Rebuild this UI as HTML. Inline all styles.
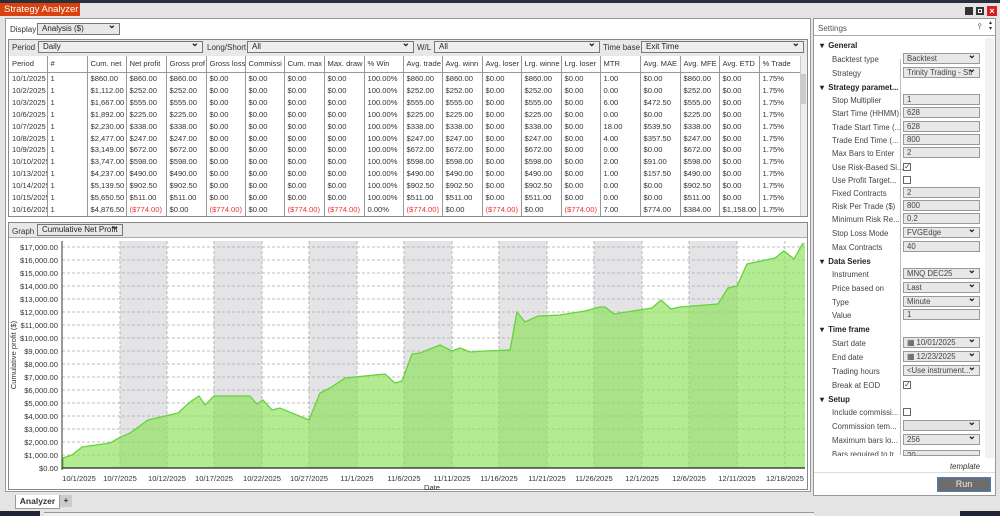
<!DOCTYPE html>
<html><head><meta charset="utf-8"><style>
*{box-sizing:border-box;margin:0;padding:0}
body{width:1000px;height:516px;overflow:hidden;background:#e4e4e4;font-family:"Liberation Sans",sans-serif;font-size:8px;color:#333;position:relative}
.a{position:absolute}
.sel{position:absolute;background:#e8e8e8;border:1px solid #777;height:12px;font-size:8px;line-height:10px;padding-left:4px;color:#222}
.sel::after{content:"⌄";position:absolute;right:3px;top:-3px;font-size:10px;font-weight:bold}
table{border-collapse:collapse;table-layout:fixed}
td{font-size:7.6px;white-space:nowrap;overflow:hidden;padding-left:3px;height:11.9px;line-height:11.9px;border-left:1px solid #999;color:#333}
tr.h td{height:16px;line-height:16px;border-bottom:1px solid #999}
.r{color:#e33}
.set div{position:absolute;font-size:7.8px;color:#444}
.lbl{left:832px}
.hd{left:820px;font-weight:bold;color:#222!important}
.inp{left:903px;width:77px;height:11px;background:#e8e8e8;border:1px solid #999;padding-left:3px;line-height:9px}
.dd::after{content:"⌄";position:absolute;right:3px;top:-3px;font-size:10px;font-weight:bold;color:#222}
.cb{left:903px;width:8px;height:8px;border:1px solid #666;background:#fff;font-size:7px;line-height:6px;text-align:center}
</style></head><body>
<!-- top bar -->
<div class="a" style="left:0;top:0;width:1000px;height:3px;background:#2a2f3c"></div>
<div class="a" style="left:0;top:3px;width:80px;height:13px;background:#d9420f;color:#fff;font-size:9.5px;line-height:13px;padding-left:4px">Strategy Analyzer</div>
<div class="a" style="left:80px;top:3px;width:920px;height:13px;background:#e4e4e4"></div>
<div class="a" style="left:965px;top:7px;width:8px;height:8px;background:#333"></div>
<div class="a" style="left:976px;top:7px;width:8px;height:8px;background:#333;border:2px solid #333;box-shadow:inset 0 0 0 1px #fff"></div>
<div class="a" style="left:987px;top:6px;width:10px;height:10px;background:#d42020;color:#fff;font-size:9px;line-height:10px;text-align:center;font-weight:bold">×</div>

<!-- left main panel -->
<div class="a" style="left:5px;top:18px;width:806px;height:474px;border:1px solid #999;background:#fff"></div>
<div class="a" style="left:10px;top:25px;font-size:8px">Display</div>
<div class="sel" style="left:37px;top:23px;width:83px">Analysis ($)</div>
<div class="a" style="left:8px;top:39px;width:800px;height:178px;border:1px solid #888;background:#e8e8e8"></div>
<div class="a" style="left:12px;top:43px">Period</div>
<div class="sel" style="left:38px;top:41px;width:165px;background:#eee">Daily</div>
<div class="a" style="left:207px;top:43px">Long/Short</div>
<div class="sel" style="left:247px;top:41px;width:167px;background:#eee">All</div>
<div class="a" style="left:417px;top:43px">W/L</div>
<div class="sel" style="left:434px;top:41px;width:166px;background:#eee">All</div>
<div class="a" style="left:603px;top:43px">Time base</div>
<div class="sel" style="left:641px;top:41px;width:163px;background:#eee">Exit Time</div>
<div class="a" style="left:9px;top:56px;width:798px;height:160px;background:#fff;overflow:hidden">
<table style="width:791px">
<colgroup><col style="width:38px"><col style="width:40px"><col style="width:39px"><col style="width:40px"><col style="width:40px"><col style="width:39px"><col style="width:39px"><col style="width:40px"><col style="width:40px"><col style="width:39px"><col style="width:39px"><col style="width:40px"><col style="width:39px"><col style="width:40px"><col style="width:39px"><col style="width:40px"><col style="width:40px"><col style="width:39px"><col style="width:40px"><col style="width:41px"></colgroup>
<tr class="h"><td style="border-left:0">Period</td><td>#</td><td>Cum. net</td><td>Net profit</td><td>Gross prof</td><td>Gross loss</td><td>Commissi</td><td>Cum. max</td><td>Max. draw</td><td>% Win</td><td>Avg. trade</td><td>Avg. winn</td><td>Avg. loser</td><td>Lrg. winne</td><td>Lrg. loser</td><td>MTR</td><td>Avg. MAE</td><td>Avg. MFE</td><td>Avg. ETD</td><td>% Trade</td></tr>
<tr><td style="border-left:0">10/1/2025</td><td>1</td><td>$860.00</td><td>$860.00</td><td>$860.00</td><td>$0.00</td><td>$0.00</td><td>$0.00</td><td>$0.00</td><td>100.00%</td><td>$860.00</td><td>$860.00</td><td>$0.00</td><td>$860.00</td><td>$0.00</td><td>1.00</td><td>$0.00</td><td>$860.00</td><td>$0.00</td><td>1.75%</td></tr>
<tr><td style="border-left:0">10/2/2025</td><td>1</td><td>$1,112.00</td><td>$252.00</td><td>$252.00</td><td>$0.00</td><td>$0.00</td><td>$0.00</td><td>$0.00</td><td>100.00%</td><td>$252.00</td><td>$252.00</td><td>$0.00</td><td>$252.00</td><td>$0.00</td><td>0.00</td><td>$0.00</td><td>$252.00</td><td>$0.00</td><td>1.75%</td></tr>
<tr><td style="border-left:0">10/3/2025</td><td>1</td><td>$1,667.00</td><td>$555.00</td><td>$555.00</td><td>$0.00</td><td>$0.00</td><td>$0.00</td><td>$0.00</td><td>100.00%</td><td>$555.00</td><td>$555.00</td><td>$0.00</td><td>$555.00</td><td>$0.00</td><td>6.00</td><td>$472.50</td><td>$555.00</td><td>$0.00</td><td>1.75%</td></tr>
<tr><td style="border-left:0">10/6/2025</td><td>1</td><td>$1,892.00</td><td>$225.00</td><td>$225.00</td><td>$0.00</td><td>$0.00</td><td>$0.00</td><td>$0.00</td><td>100.00%</td><td>$225.00</td><td>$225.00</td><td>$0.00</td><td>$225.00</td><td>$0.00</td><td>0.00</td><td>$0.00</td><td>$225.00</td><td>$0.00</td><td>1.75%</td></tr>
<tr><td style="border-left:0">10/7/2025</td><td>1</td><td>$2,230.00</td><td>$338.00</td><td>$338.00</td><td>$0.00</td><td>$0.00</td><td>$0.00</td><td>$0.00</td><td>100.00%</td><td>$338.00</td><td>$338.00</td><td>$0.00</td><td>$338.00</td><td>$0.00</td><td>18.00</td><td>$539.50</td><td>$338.00</td><td>$0.00</td><td>1.75%</td></tr>
<tr><td style="border-left:0">10/8/2025</td><td>1</td><td>$2,477.00</td><td>$247.00</td><td>$247.00</td><td>$0.00</td><td>$0.00</td><td>$0.00</td><td>$0.00</td><td>100.00%</td><td>$247.00</td><td>$247.00</td><td>$0.00</td><td>$247.00</td><td>$0.00</td><td>4.00</td><td>$357.50</td><td>$247.00</td><td>$0.00</td><td>1.75%</td></tr>
<tr><td style="border-left:0">10/9/2025</td><td>1</td><td>$3,149.00</td><td>$672.00</td><td>$672.00</td><td>$0.00</td><td>$0.00</td><td>$0.00</td><td>$0.00</td><td>100.00%</td><td>$672.00</td><td>$672.00</td><td>$0.00</td><td>$672.00</td><td>$0.00</td><td>0.00</td><td>$0.00</td><td>$672.00</td><td>$0.00</td><td>1.75%</td></tr>
<tr><td style="border-left:0">10/10/2025</td><td>1</td><td>$3,747.00</td><td>$598.00</td><td>$598.00</td><td>$0.00</td><td>$0.00</td><td>$0.00</td><td>$0.00</td><td>100.00%</td><td>$598.00</td><td>$598.00</td><td>$0.00</td><td>$598.00</td><td>$0.00</td><td>2.00</td><td>$91.00</td><td>$598.00</td><td>$0.00</td><td>1.75%</td></tr>
<tr><td style="border-left:0">10/13/2025</td><td>1</td><td>$4,237.00</td><td>$490.00</td><td>$490.00</td><td>$0.00</td><td>$0.00</td><td>$0.00</td><td>$0.00</td><td>100.00%</td><td>$490.00</td><td>$490.00</td><td>$0.00</td><td>$490.00</td><td>$0.00</td><td>1.00</td><td>$157.50</td><td>$490.00</td><td>$0.00</td><td>1.75%</td></tr>
<tr><td style="border-left:0">10/14/2025</td><td>1</td><td>$5,139.50</td><td>$902.50</td><td>$902.50</td><td>$0.00</td><td>$0.00</td><td>$0.00</td><td>$0.00</td><td>100.00%</td><td>$902.50</td><td>$902.50</td><td>$0.00</td><td>$902.50</td><td>$0.00</td><td>0.00</td><td>$0.00</td><td>$902.50</td><td>$0.00</td><td>1.75%</td></tr>
<tr><td style="border-left:0">10/15/2025</td><td>1</td><td>$5,650.50</td><td>$511.00</td><td>$511.00</td><td>$0.00</td><td>$0.00</td><td>$0.00</td><td>$0.00</td><td>100.00%</td><td>$511.00</td><td>$511.00</td><td>$0.00</td><td>$511.00</td><td>$0.00</td><td>0.00</td><td>$0.00</td><td>$511.00</td><td>$0.00</td><td>1.75%</td></tr>
<tr><td style="border-left:0">10/16/2025</td><td>1</td><td>$4,876.50</td><td class="r">($774.00)</td><td>$0.00</td><td class="r">($774.00)</td><td>$0.00</td><td class="r">($774.00)</td><td class="r">($774.00)</td><td>0.00%</td><td class="r">($774.00)</td><td>$0.00</td><td class="r">($774.00)</td><td>$0.00</td><td class="r">($774.00)</td><td>7.00</td><td>$774.00</td><td>$384.00</td><td>$1,158.00</td><td>1.75%</td></tr>
<tr><td style="border-left:0">&nbsp;</td><td></td><td></td><td></td><td></td><td></td><td></td><td></td><td></td><td></td><td></td><td></td><td></td><td></td><td></td><td></td><td></td><td></td><td></td><td></td></tr>
</table>
<div class="a" style="left:791px;top:0;width:7px;height:160px;background:#eee;border-left:1px solid #ccc"></div>
<div class="a" style="left:792px;top:18px;width:5px;height:30px;background:#ccc"></div>
</div>

<!-- graph panel -->
<div class="a" style="left:8px;top:222px;width:800px;height:268px;border:1px solid #888;background:#fff"></div>
<div class="a" style="left:9px;top:223px;width:798px;height:15px;background:#e8e8e8;border-bottom:1px solid #aaa"></div>
<div class="a" style="left:12px;top:227px">Graph</div>
<div class="sel" style="left:37px;top:224px;width:86px">Cumulative Net Profit</div>

<svg class="a" style="left:0;top:0" width="1000" height="516" font-family="Liberation Sans, sans-serif">
<g fill="#e4e4e6">
<rect x="120" y="241" width="47" height="227"/><rect x="214" y="241" width="48" height="227"/><rect x="309" y="241" width="48" height="227"/><rect x="404" y="241" width="48" height="227"/><rect x="499" y="241" width="48" height="227"/><rect x="594" y="241" width="48" height="227"/><rect x="689" y="241" width="48" height="227"/>
</g>
<g stroke="#aaa" stroke-dasharray="3,2" stroke-width="0.8">
<line x1="62" x2="805" y1="247" y2="247"/><line x1="62" x2="805" y1="260" y2="260"/><line x1="62" x2="805" y1="273" y2="273"/><line x1="62" x2="805" y1="286" y2="286"/><line x1="62" x2="805" y1="299" y2="299"/><line x1="62" x2="805" y1="312" y2="312"/><line x1="62" x2="805" y1="325" y2="325"/><line x1="62" x2="805" y1="338" y2="338"/><line x1="62" x2="805" y1="351" y2="351"/><line x1="62" x2="805" y1="364" y2="364"/><line x1="62" x2="805" y1="377" y2="377"/><line x1="62" x2="805" y1="390" y2="390"/><line x1="62" x2="805" y1="403" y2="403"/><line x1="62" x2="805" y1="416" y2="416"/><line x1="62" x2="805" y1="429" y2="429"/><line x1="62" x2="805" y1="442" y2="442"/><line x1="62" x2="805" y1="455" y2="455"/>
<line x1="120" x2="120" y1="241" y2="468"/><line x1="167" x2="167" y1="241" y2="468"/><line x1="214" x2="214" y1="241" y2="468"/><line x1="262" x2="262" y1="241" y2="468"/><line x1="309" x2="309" y1="241" y2="468"/><line x1="357" x2="357" y1="241" y2="468"/><line x1="404" x2="404" y1="241" y2="468"/><line x1="452" x2="452" y1="241" y2="468"/><line x1="499" x2="499" y1="241" y2="468"/><line x1="547" x2="547" y1="241" y2="468"/><line x1="594" x2="594" y1="241" y2="468"/><line x1="642" x2="642" y1="241" y2="468"/><line x1="689" x2="689" y1="241" y2="468"/><line x1="737" x2="737" y1="241" y2="468"/><line x1="785" x2="785" y1="241" y2="468"/>
</g>
<polygon fill="#88e058" fill-opacity="0.65" points="63,468 63,458 72,455 82,447 110,443 119,438 130,433 148,420 165,416 178,413 190,402 199,396 205,405 214,396 250,396 257,404 263,400 272,410 280,408 309,420 320,393 330,388 345,378 385,374 395,383 402,381 412,354 420,353 440,345 452,351 460,348 470,352 485,351 510,350 517,312 525,322 538,316 560,315 585,311 600,307 605,307 614,314 652,308 661,300 671,309 680,307 718,304 728,288 737,286 747,264 775,258 784,251 794,259 803,243 805,243 805,468"/>
<polyline fill="none" stroke="#66d33a" stroke-width="1.3" points="63,468 63,458 72,455 82,447 110,443 119,438 130,433 148,420 165,416 178,413 190,402 199,396 205,405 214,396 250,396 257,404 263,400 272,410 280,408 309,420 320,393 330,388 345,378 385,374 395,383 402,381 412,354 420,353 440,345 452,351 460,348 470,352 485,351 510,350 517,312 525,322 538,316 560,315 585,311 600,307 605,307 614,314 652,308 661,300 671,309 680,307 718,304 728,288 737,286 747,264 775,258 784,251 794,259 803,243"/>
<line x1="62" x2="62" y1="241" y2="470" stroke="#333"/>
<line x1="62" x2="805" y1="468" y2="468" stroke="#222" stroke-width="1.2"/>
<g font-size="7.6" fill="#333" text-anchor="end">
<text x="58" y="250">$17,000.00</text><text x="58" y="263">$16,000.00</text><text x="58" y="276">$15,000.00</text><text x="58" y="289">$14,000.00</text><text x="58" y="302">$13,000.00</text><text x="58" y="315">$12,000.00</text><text x="58" y="328">$11,000.00</text><text x="58" y="341">$10,000.00</text><text x="58" y="354">$9,000.00</text><text x="58" y="367">$8,000.00</text><text x="58" y="380">$7,000.00</text><text x="58" y="393">$6,000.00</text><text x="58" y="406">$5,000.00</text><text x="58" y="419">$4,000.00</text><text x="58" y="432">$3,000.00</text><text x="58" y="445">$2,000.00</text><text x="58" y="458">$1,000.00</text><text x="58" y="471">$0.00</text>
</g>
<g font-size="7.6" fill="#333" text-anchor="middle">
<text x="79" y="481">10/1/2025</text><text x="120" y="481">10/7/2025</text><text x="167" y="481">10/12/2025</text><text x="214" y="481">10/17/2025</text><text x="262" y="481">10/22/2025</text><text x="309" y="481">10/27/2025</text><text x="357" y="481">11/1/2025</text><text x="404" y="481">11/6/2025</text><text x="452" y="481">11/11/2025</text><text x="499" y="481">11/16/2025</text><text x="547" y="481">11/21/2025</text><text x="594" y="481">11/26/2025</text><text x="642" y="481">12/1/2025</text><text x="689" y="481">12/6/2025</text><text x="737" y="481">12/11/2025</text><text x="785" y="481">12/18/2025</text>
<text x="432" y="490">Date</text>
<text x="16" y="355" transform="rotate(-90 16 355)">Cumulative profit ($)</text>
</g>
</svg>

<!-- bottom tabs -->
<div class="a" style="left:15px;top:495px;width:45px;height:14px;background:#fff;border:1px solid #999;border-top:0;font-weight:bold;font-size:8.5px;line-height:13px;text-align:center">Analyzer</div>
<div class="a" style="left:60px;top:495px;width:12px;height:12px;background:#ccc;text-align:center;font-weight:bold;line-height:12px">+</div>
<div class="a" style="left:0;top:511px;width:40px;height:5px;background:#1e2535"></div>
<div class="a" style="left:44px;top:512px;width:770px;height:4px;background:#f0f0f0;border-top:1px solid #999"></div>
<div class="a" style="left:960px;top:511px;width:40px;height:5px;background:#1e2535"></div>

<!-- settings panel -->
<div class="a" style="left:813px;top:18px;width:183px;height:478px;border:1px solid #999;background:#fff"></div>
<div class="a" style="left:814px;top:19px;width:181px;height:17px;border-bottom:1px solid #aaa"></div>
<div class="a" style="left:818px;top:24px;font-size:8px;color:#555">Settings</div>
<div class="a" style="left:978px;top:22px;font-size:8px">⫯</div>
<div class="a" style="left:989px;top:20px;font-size:6px;line-height:6px">▴<br>▾</div>
<div class="a" style="left:900px;top:59px;width:1px;height:396px;background:#bbb"></div>
<div class="a" style="left:985px;top:38px;width:9px;height:420px;background:#f2f2f2"></div>
<div class="set">
<div class="hd" style="top:41px">▾ &nbsp;General</div>
<div class="lbl" style="top:55px">Backtest type</div><div class="inp dd" style="top:53px">Backtest</div>
<div class="lbl" style="top:69px">Strategy</div><div class="inp dd" style="top:67px">Trinity Trading - Str</div>
<div class="hd" style="top:83px">▾ &nbsp;Strategy paramet...</div>
<div class="lbl" style="top:96px">Stop Multiplier</div><div class="inp" style="top:94px">1</div>
<div class="lbl" style="top:109px">Start Time (HHMM)</div><div class="inp" style="top:107px">628</div>
<div class="lbl" style="top:123px">Trade Start Time (...</div><div class="inp" style="top:121px">628</div>
<div class="lbl" style="top:136px">Trade End Time (...</div><div class="inp" style="top:134px">800</div>
<div class="lbl" style="top:149px">Max Bars to Enter</div><div class="inp" style="top:147px">2</div>
<div class="lbl" style="top:163px">Use Risk-Based Si...</div><div class="cb" style="top:163px">✓</div>
<div class="lbl" style="top:176px">Use Profit Target...</div><div class="cb" style="top:176px"></div>
<div class="lbl" style="top:189px">Fixed Contracts</div><div class="inp" style="top:187px">2</div>
<div class="lbl" style="top:202px">Risk Per Trade ($)</div><div class="inp" style="top:200px">800</div>
<div class="lbl" style="top:215px">Minimum Risk Re...</div><div class="inp" style="top:213px">0.2</div>
<div class="lbl" style="top:229px">Stop Loss Mode</div><div class="inp dd" style="top:227px">FVGEdge</div>
<div class="lbl" style="top:243px">Max Contracts</div><div class="inp" style="top:241px">40</div>
<div class="hd" style="top:257px">▾ &nbsp;Data Series</div>
<div class="lbl" style="top:270px">Instrument</div><div class="inp dd" style="top:268px">MNQ DEC25</div>
<div class="lbl" style="top:284px">Price based on</div><div class="inp dd" style="top:282px">Last</div>
<div class="lbl" style="top:298px">Type</div><div class="inp dd" style="top:296px">Minute</div>
<div class="lbl" style="top:311px">Value</div><div class="inp" style="top:309px">1</div>
<div class="hd" style="top:325px">▾ &nbsp;Time frame</div>
<div class="lbl" style="top:339px">Start date</div><div class="inp dd" style="top:337px">▦ 10/01/2025</div>
<div class="lbl" style="top:353px">End date</div><div class="inp dd" style="top:351px">▦ 12/23/2025</div>
<div class="lbl" style="top:367px">Trading hours</div><div class="inp dd" style="top:365px">&lt;Use instrument...</div>
<div class="lbl" style="top:381px">Break at EOD</div><div class="cb" style="top:381px">✓</div>
<div class="hd" style="top:395px">▾ &nbsp;Setup</div>
<div class="lbl" style="top:408px">Include commissi...</div><div class="cb" style="top:408px"></div>
<div class="lbl" style="top:422px">Commission tem...</div><div class="inp dd" style="top:420px;background:#e4e4e4;color:#999"></div>
<div class="lbl" style="top:436px">Maximum bars lo...</div><div class="inp dd" style="top:434px">256</div>
<div class="lbl" style="top:450px;height:6px;overflow:hidden">Bars required to tr</div><div class="inp" style="top:450px;height:6px;overflow:hidden">20</div>
<div style="left:950px;top:462px;font-style:italic;color:#333">template</div>
</div>
<div class="a" style="left:814px;top:472px;width:181px;height:1px;background:#ddd"></div>
<div class="a" style="left:937px;top:477px;width:54px;height:15px;background:#6d6d6d;border:1px solid #4a7fc0;color:#eee;font-size:9px;line-height:13px;text-align:center">Run</div>
</body></html>
